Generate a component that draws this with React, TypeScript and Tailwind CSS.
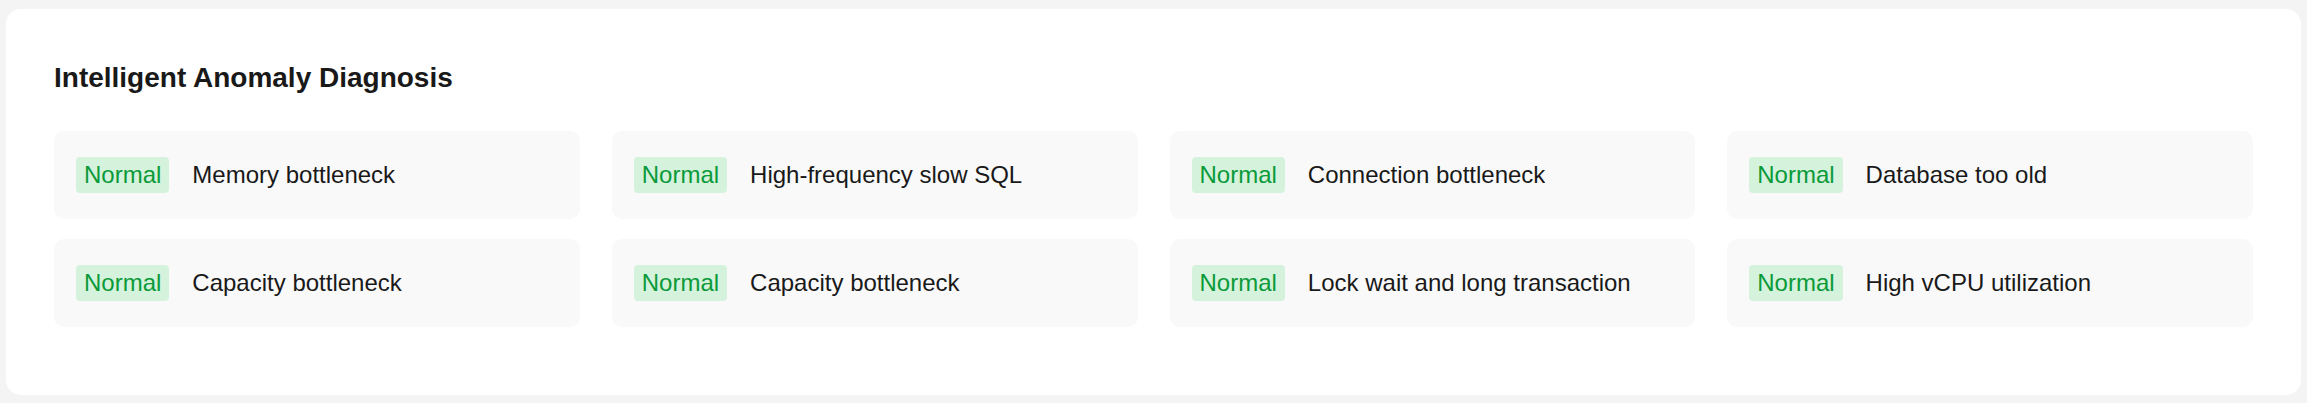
const items = [
  "Memory bottleneck",
  "High-frequency slow SQL",
  "Connection bottleneck",
  "Database too old",
  "Capacity bottleneck",
  "Capacity bottleneck",
  "Lock wait and long transaction",
  "High vCPU utilization",
]

function DiagnosisItem({ label }: { label: string }) {
  return (
    <div className="flex h-[88px] items-center rounded-[10px] bg-[#f9f9f9] px-[22px]">
      <span className="flex h-[36px] items-center rounded-[4px] bg-[#d5f2dc] px-[8px] text-[24px] text-[#0b9a3a]">
        Normal
      </span>
      <span className="ml-[23px] truncate text-[24px] text-[#191919]">{label}</span>
    </div>
  )
}

export default function App() {
  return (
    <div
      className="min-h-screen bg-[#f4f4f4] px-[6px] pt-[9px] pb-[8px]"
      style={{ fontFamily: '"Liberation Sans", Arial, sans-serif' }}
    >
      <div className="rounded-[15px] bg-white px-[48px] pt-[48px] pb-[68px]">
        <h2 className="text-[28px] font-bold leading-[42px] text-[#191919]">
          Intelligent Anomaly Diagnosis
        </h2>
        <div className="mt-[32px] grid grid-cols-4 gap-x-[32px] gap-y-[20px]">
          {items.map((label, i) => (
            <DiagnosisItem key={i} label={label} />
          ))}
        </div>
      </div>
    </div>
  )
}
